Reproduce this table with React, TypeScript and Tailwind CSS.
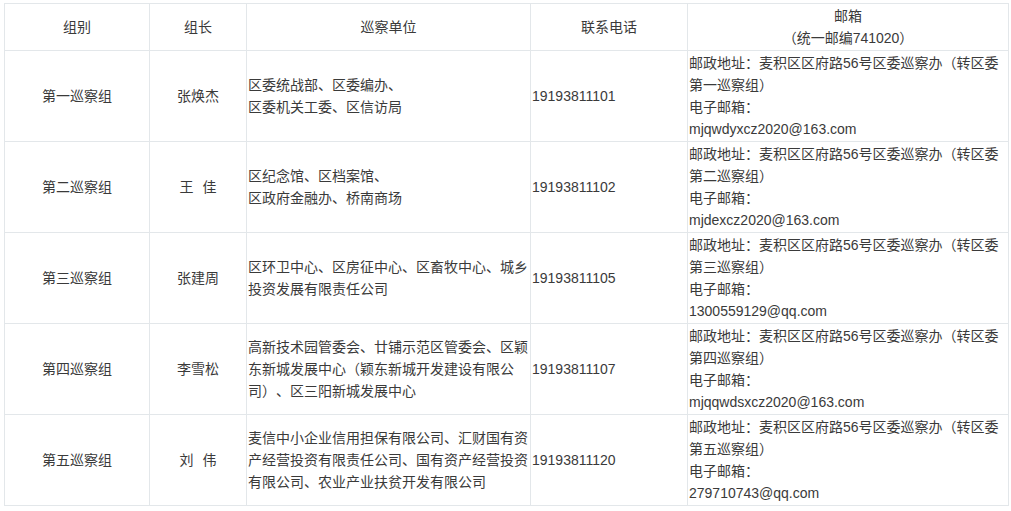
import React from "react";

type Row = {
  group: string;
  leader: React.ReactNode;
  units: string[];
  phone: string;
  groupName: string;
  email: string;
};

const rows: Row[] = [
  {
    group: "第一巡察组",
    leader: "张焕杰",
    units: ["区委统战部、区委编办、", "区委机关工委、区信访局"],
    phone: "19193811101",
    groupName: "第一巡察组",
    email: "mjqwdyxcz2020@163.com",
  },
  {
    group: "第二巡察组",
    leader: (
      <>
        王<span className="inline-block w-[9px]" />佳
      </>
    ),
    units: ["区纪念馆、区档案馆、", "区政府金融办、桥南商场"],
    phone: "19193811102",
    groupName: "第二巡察组",
    email: "mjdexcz2020@163.com",
  },
  {
    group: "第三巡察组",
    leader: "张建周",
    units: ["区环卫中心、区房征中心、区畜牧中心、城乡", "投资发展有限责任公司"],
    phone: "19193811105",
    groupName: "第三巡察组",
    email: "1300559129@qq.com",
  },
  {
    group: "第四巡察组",
    leader: "李雪松",
    units: [
      "高新技术园管委会、廿铺示范区管委会、区颖",
      "东新城发展中心（颖东新城开发建设有限公",
      "司）、区三阳新城发展中心",
    ],
    phone: "19193811107",
    groupName: "第四巡察组",
    email: "mjqqwdsxcz2020@163.com",
  },
  {
    group: "第五巡察组",
    leader: (
      <>
        刘<span className="inline-block w-[9px]" />伟
      </>
    ),
    units: [
      "麦信中小企业信用担保有限公司、汇财国有资",
      "产经营投资有限责任公司、国有资产经营投资",
      "有限公司、农业产业扶贫开发有限公司",
    ],
    phone: "19193811120",
    groupName: "第五巡察组",
    email: "279710743@qq.com",
  },
];

const cell =
  "border border-[#e3e7ea] px-[1px] py-[1px] align-middle leading-[22px] whitespace-nowrap overflow-hidden";

export default function App() {
  return (
    <div
      className="bg-white w-[1011px] h-[511px] overflow-hidden text-[14px] text-[#3a3a3a] [text-spacing-trim:space-all]"
      style={{ fontFamily: '"Liberation Sans", "Noto Sans CJK SC", sans-serif' }}
    >
      <div className="pl-[4px] pt-[3px]">
        <table className="table-fixed border-collapse w-[1004px]">
          <colgroup>
            <col className="w-[145px]" />
            <col className="w-[97px]" />
            <col className="w-[284px]" />
            <col className="w-[157px]" />
            <col className="w-[321px]" />
          </colgroup>
          <thead>
            <tr>
              <td className={`${cell} text-center`}>组别</td>
              <td className={`${cell} text-center`}>组长</td>
              <td className={`${cell} text-center`}>巡察单位</td>
              <td className={`${cell} text-center`}>联系电话</td>
              <td className={`${cell} text-center`}>
                邮箱
                <br />
                （统一邮编741020）
              </td>
            </tr>
          </thead>
          <tbody>
            {rows.map((r) => (
              <tr key={r.group}>
                <td className={`${cell} text-center`}>{r.group}</td>
                <td className={`${cell} text-center`}>{r.leader}</td>
                <td className={`${cell} text-left`}>
                  {r.units.map((u, i) => (
                    <div key={i}>{u}</div>
                  ))}
                </td>
                <td className={`${cell} text-left`}>{r.phone}</td>
                <td className={`${cell} text-left`}>
                  <div>邮政地址：麦积区区府路56号区委巡察办（转区委</div>
                  <div>{r.groupName}）</div>
                  <div>电子邮箱：</div>
                  <div>{r.email}</div>
                </td>
              </tr>
            ))}
          </tbody>
        </table>
      </div>
    </div>
  );
}
